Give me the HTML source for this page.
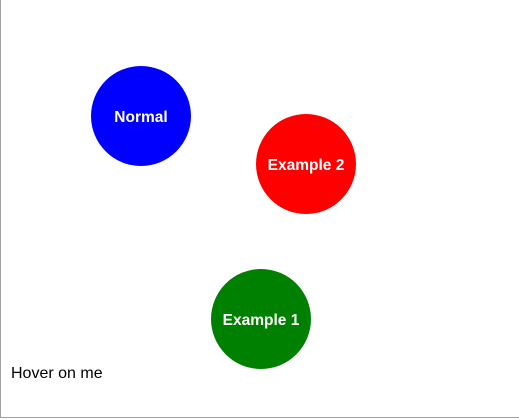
<!DOCTYPE html>
<html><head><style>
html,body{margin:0;padding:0;background:#fff;}
body{width:519px;height:419px;position:relative;overflow:hidden;font-family:"Liberation Sans",Arial,sans-serif;}
.frame{position:absolute;left:0;top:0;width:518px;height:417px;border-left:1px solid #a0a0a0;border-bottom:1px solid #a0a0a0;}
.c{position:absolute;width:100px;height:100px;border-radius:50%;color:#fff;font-weight:bold;font-size:15.5px;display:flex;align-items:center;justify-content:center;box-sizing:border-box;padding-top:3px;}
.t{position:absolute;left:11px;top:365px;font-size:16px;color:#000;}
</style></head><body>
<div class="frame"></div>
<div class="c" style="left:91px;top:66px;background:#0000ff">Normal</div>
<div class="c" style="left:256px;top:114px;background:#ff0000">Example 2</div>
<div class="c" style="left:211px;top:269px;background:#008000">Example 1</div>
<div class="t">Hover on me</div>
</body></html>
